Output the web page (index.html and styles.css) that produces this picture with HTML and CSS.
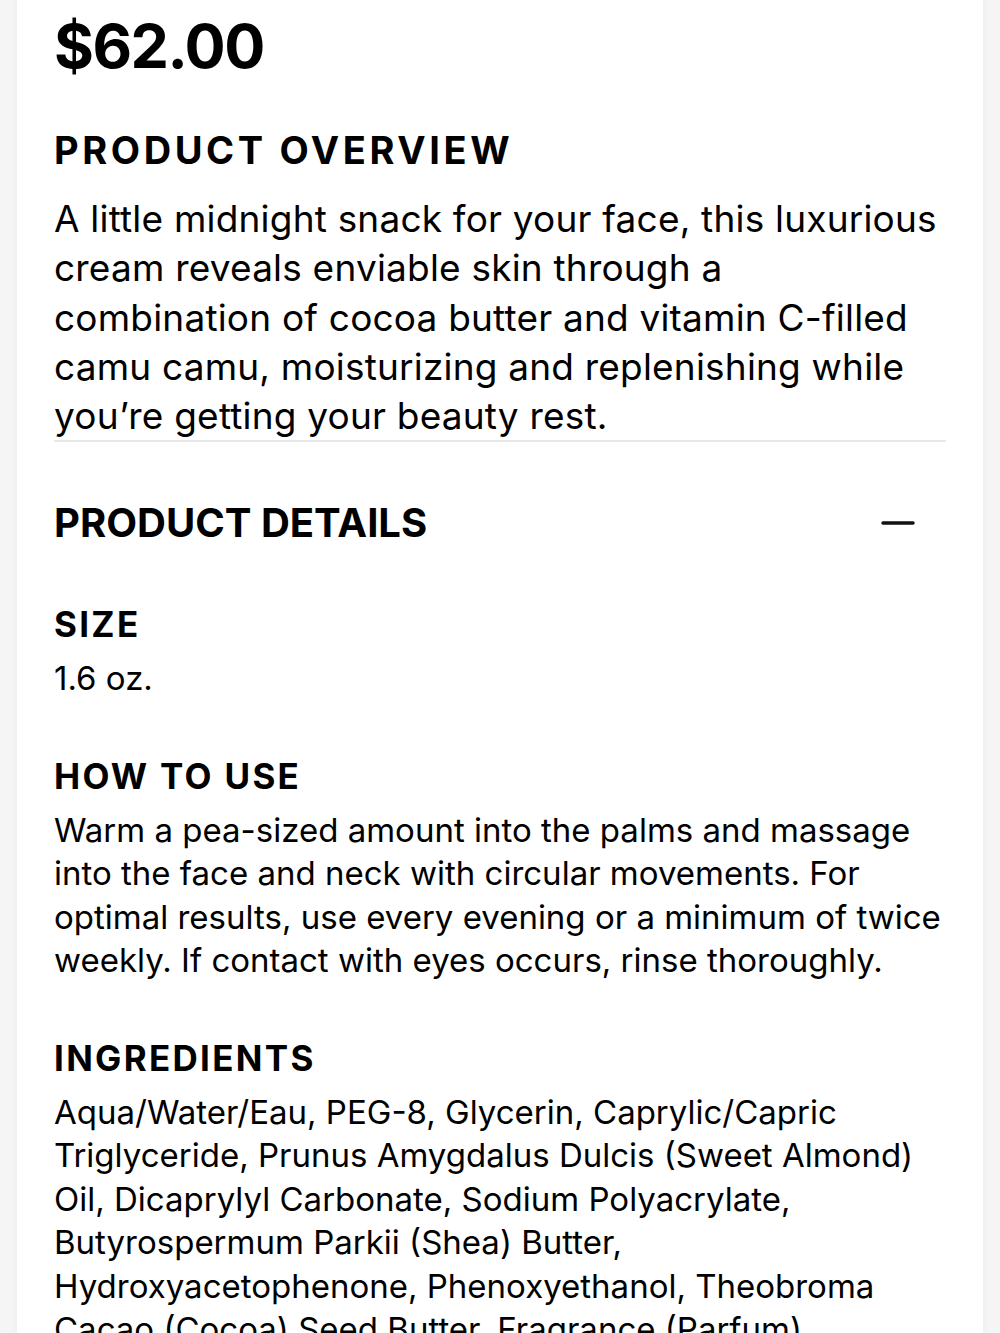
FILE: index.html
```html
<!DOCTYPE html>
<html lang="en">
<head>
<meta charset="utf-8">
<title>Product</title>
<link rel="stylesheet" href="styles.css">
</head>
<body>
<main class="card">
  <div class="price">$62.00</div>
  <section class="overview">
    <h2 class="section-title">PRODUCT OVERVIEW</h2>
    <p class="overview-text">A little midnight snack for your face, this luxurious cream reveals enviable skin through a combination of cocoa butter and vitamin C-filled camu camu, moisturizing and replenishing while you’re getting your beauty rest.</p>
  </section>
  <section class="details">
    <div class="details-head">
      <h2 class="details-title">PRODUCT DETAILS</h2>
      <svg class="minus" width="34" height="6" viewBox="0 0 34 6"><line x1="2" y1="3" x2="32" y2="3" stroke="#111" stroke-width="3.5" stroke-linecap="round"/></svg>
    </div>
    <div class="detail">
      <h3 class="detail-title">SIZE</h3>
      <p class="detail-text">1.6 oz.</p>
    </div>
    <div class="detail">
      <h3 class="detail-title">HOW TO USE</h3>
      <p class="detail-text">Warm a pea-sized amount into the palms and massage into the face and neck with circular movements. For optimal results, use every evening or a minimum of twice weekly. If contact with eyes occurs, rinse thoroughly.</p>
    </div>
    <div class="detail">
      <h3 class="detail-title">INGREDIENTS</h3>
      <p class="detail-text">Aqua/Water/Eau, PEG-8, Glycerin, Caprylic/Capric Triglyceride, Prunus Amygdalus Dulcis (Sweet Almond) Oil, Dicaprylyl Carbonate, Sodium Polyacrylate, Butyrospermum Parkii (Shea) Butter, Hydroxyacetophenone, Phenoxyethanol, Theobroma Cacao (Cocoa) Seed Butter, Fragrance (Parfum), Tocopherol, Myrciaria Dubia Fruit Extract.</p>
    </div>
  </section>
</main>
</body>
</html>
```

FILE: styles.css
```css
html, body {
  margin: 0;
  padding: 0;
  background: #f5f5f5;
}
body {
  font-family: Inter, "Noto Sans", Roboto, sans-serif;
  color: #000;
  overflow: hidden;
}
.card {
  background: #fff;
  margin: 0 17px;
  padding: 14px 37px 40px;
  box-shadow: 0 0 8px rgba(0,0,0,0.05);
  min-height: 1400px;
}
.price {
  font-size: 61px;
  font-weight: 700;
  line-height: 64px;
  letter-spacing: -1.5px;
}
.section-title {
  margin: 50px 0 0;
  font-size: 38px;
  font-weight: 700;
  letter-spacing: 3.6px;
  line-height: 44px;
}
.overview-text {
  margin: 22px 0 0;
  font-size: 37px;
  line-height: 49.25px;
  letter-spacing: 0.2px;
  padding-bottom: 0;
  border-bottom: 2px solid #e8e8e8;
}
.details-head {
  display: flex;
  align-items: center;
  justify-content: space-between;
  margin-top: 57px;
  padding-right: 31px;
}
.details-title {
  margin: 0;
  font-size: 40px;
  font-weight: 700;
  line-height: 48px;
  letter-spacing: 0;
}
.detail {
  margin-top: 56px;
}
.detail + .detail {
  margin-top: 54px;
}
.detail-title {
  margin: 0;
  font-size: 35px;
  font-weight: 700;
  letter-spacing: 2.3px;
  line-height: 42px;
}
.detail-text {
  margin: 12px 0 0;
  font-size: 33px;
  line-height: 43.5px;
  letter-spacing: 0;
}
```
